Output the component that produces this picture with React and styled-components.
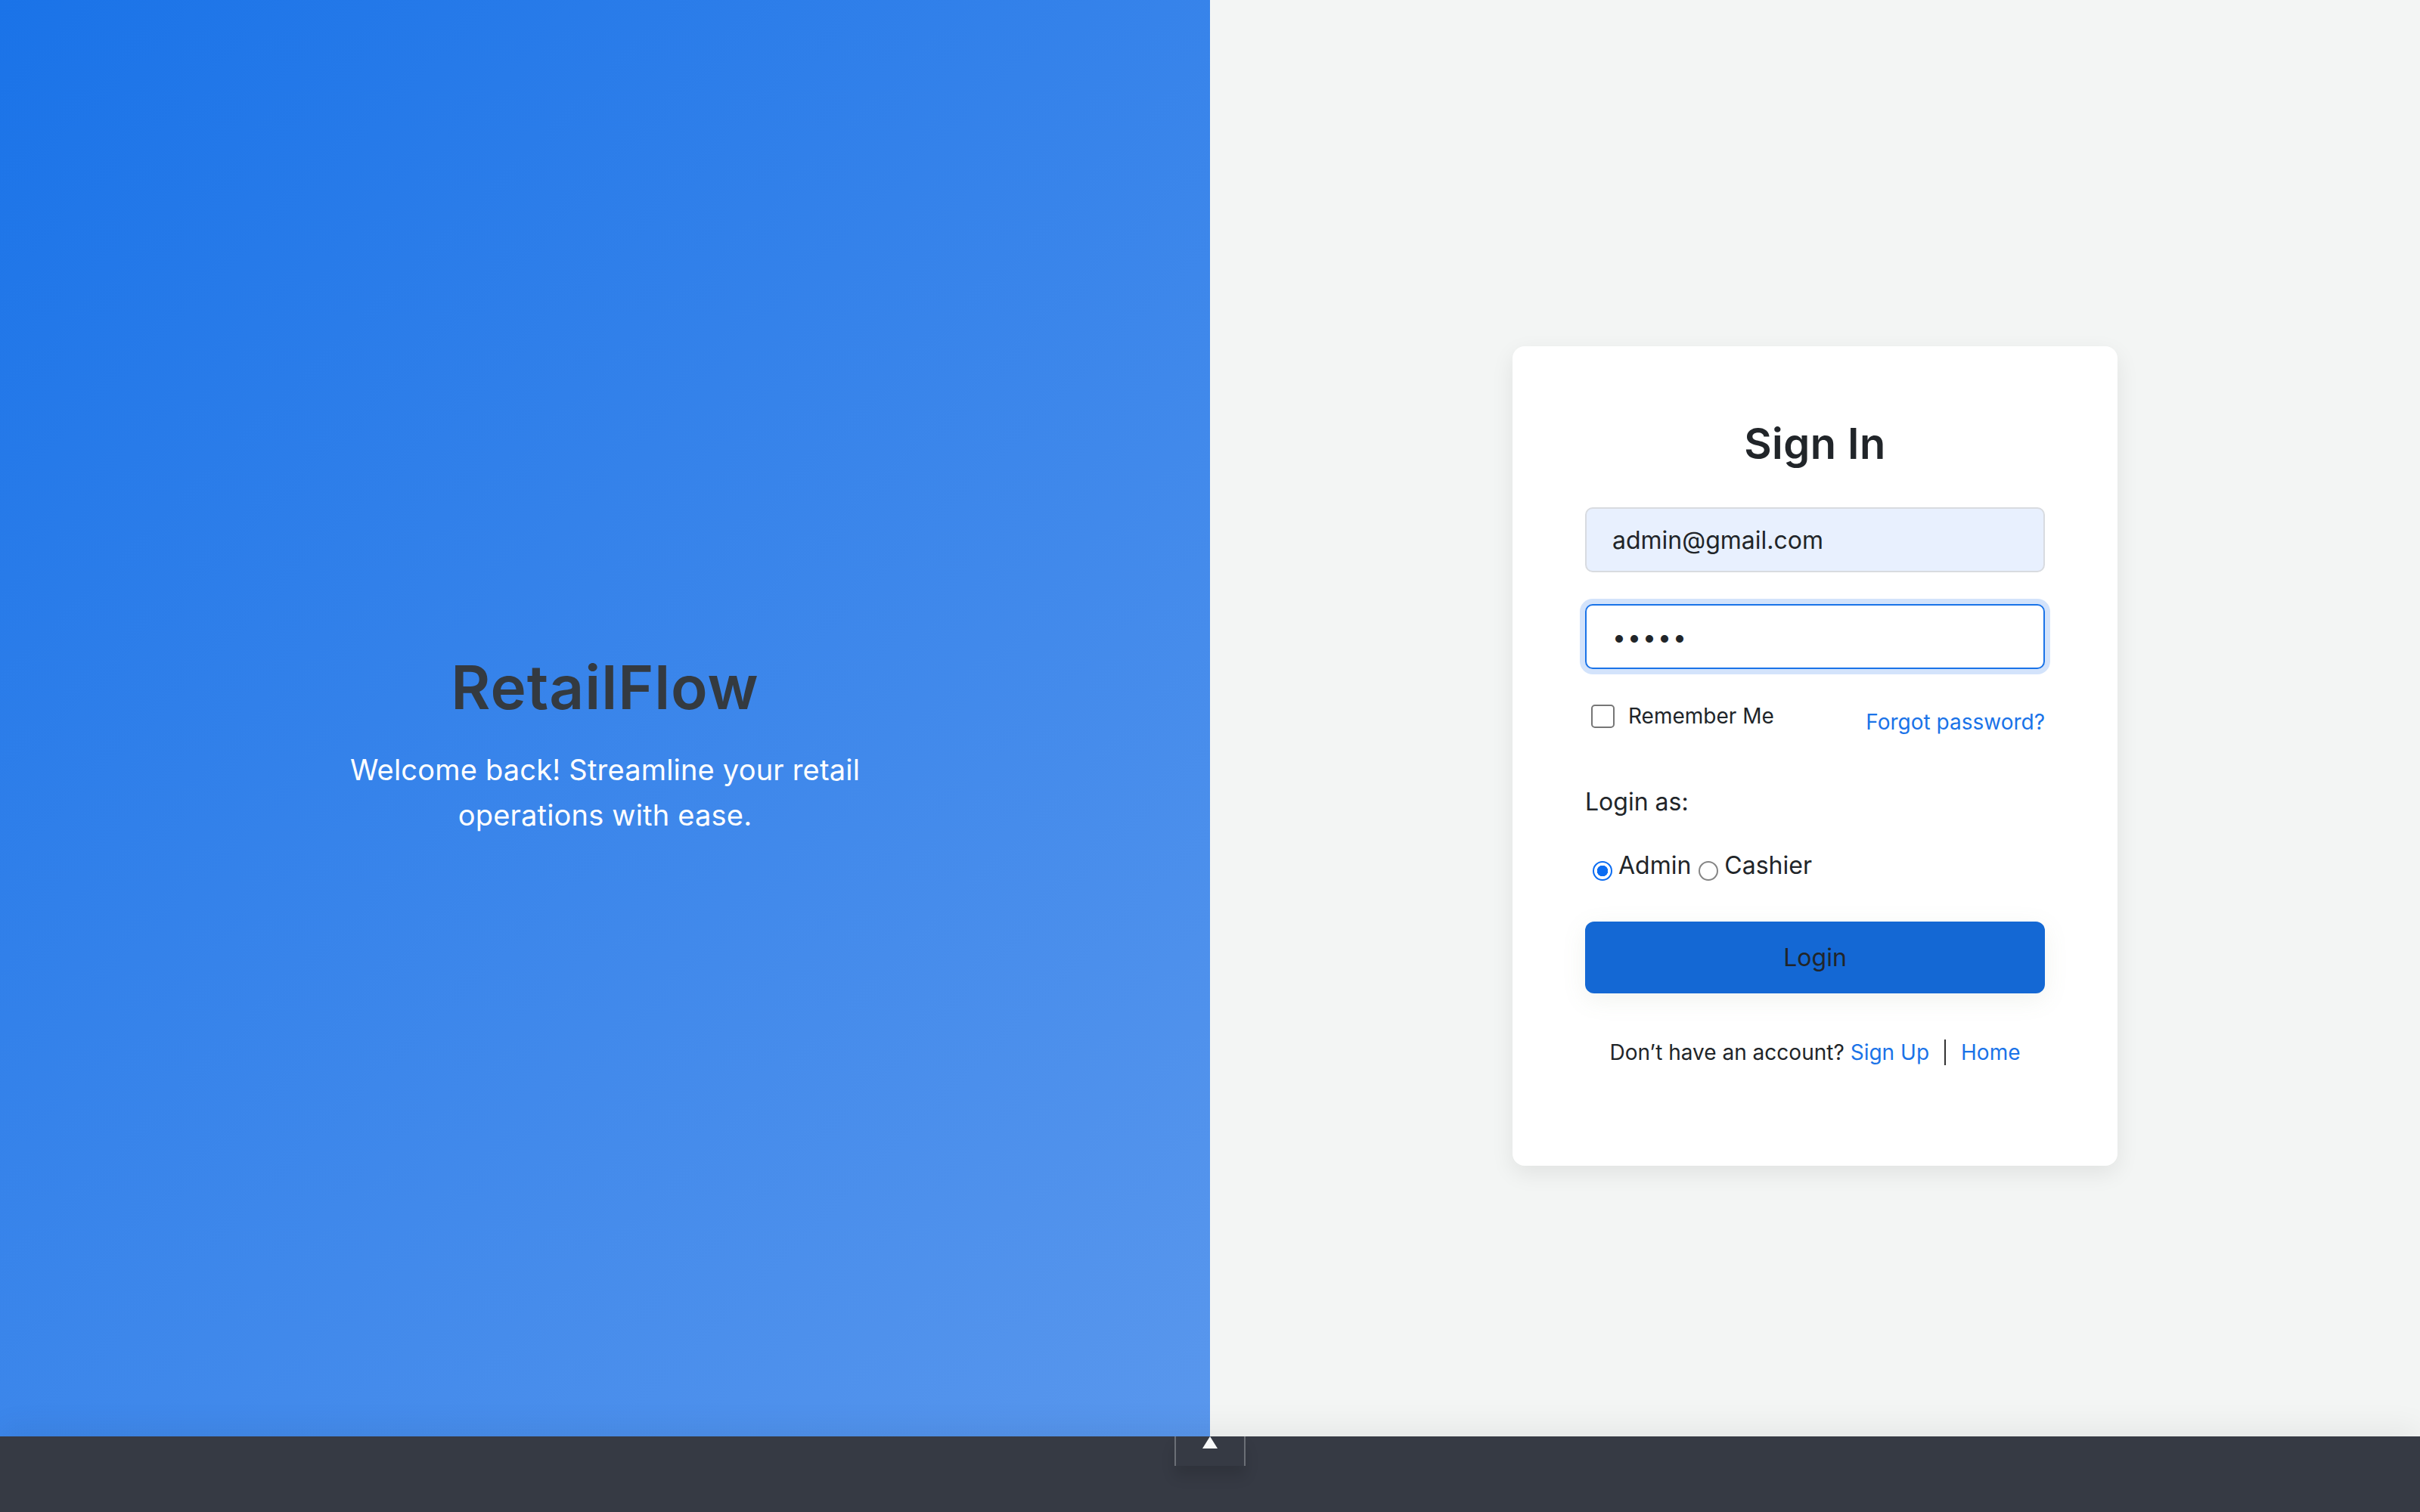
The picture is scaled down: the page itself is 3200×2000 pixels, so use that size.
import React from "react";
import styled, { createGlobalStyle } from "styled-components";

const GlobalStyle = createGlobalStyle`
  html, body {
    margin: 0;
    padding: 0;
  }
  body {
    font-family: Inter, "Noto Sans", Arial, sans-serif;
    color: #212529;
    background: #f3f5f4;
  }
  * {
    box-sizing: border-box;
  }
`;

const Page = styled.div`
  display: grid;
  grid-template-columns: 1fr 1fr;
  height: 100vh;
`;

const BrandPanel = styled.section`
  display: flex;
  align-items: center;
  justify-content: center;
  background: linear-gradient(135deg, #1a73e8 0%, #5b98ed 100%);
`;

const Hero = styled.div`
  max-width: 760px;
  text-align: center;
`;

const Brand = styled.h1`
  margin: 0 0 31px;
  font-family: Inter, "Open Sans", sans-serif;
  font-size: 80px;
  line-height: 1.2;
  font-weight: 600;
  letter-spacing: 1px;
  color: #343a40;
`;

const Tagline = styled.p`
  margin: 0 0 32px;
  font-size: 38px;
  line-height: 60px;
  letter-spacing: 0.2px;
  color: #ffffff;
`;

const FormPanel = styled.section`
  display: flex;
  align-items: center;
  justify-content: center;
  background: #f3f5f4;
`;

const Card = styled.div`
  width: 800px;
  padding: 96px 96px 130px;
  background: #ffffff;
  border-radius: 16px;
  box-shadow: 0 10px 30px rgba(0, 0, 0, 0.08);
`;

const Title = styled.h2`
  margin: 0 0 50px;
  text-align: center;
  font-size: 56px;
  line-height: 1.2;
  font-weight: 600;
  letter-spacing: 0.5px;
  color: #212529;
`;

const Input = styled.input`
  display: block;
  width: 100%;
  height: 86px;
  margin-bottom: ${(p) => p.$gap || 0}px;
  padding: 0 34px;
  font-family: Inter, sans-serif;
  font-size: 32px;
  color: #212529;
  background: ${(p) => (p.$filled ? "#e8f0fe" : "#ffffff")};
  border: 2px solid ${(p) => (p.$focused ? "#1a73e8" : "#d8dbe0")};
  border-radius: 10px;
  box-shadow: ${(p) => (p.$focused ? "0 0 0 7px #d3e3fb" : "none")};
  outline: none;
  letter-spacing: ${(p) => (p.type === "password" ? "2px" : "0")};
`;

const OptionsRow = styled.div`
  display: flex;
  justify-content: space-between;
  align-items: flex-start;
  margin-top: 42px;
`;

const CheckLabel = styled.label`
  display: flex;
  align-items: center;
  gap: 18px;
  padding-left: 8px;
  font-size: 28px;
  line-height: 40px;
  color: #212529;
`;

const CheckBox = styled.input`
  appearance: none;
  width: 31px;
  height: 31px;
  margin: 0;
  background: #fff;
  border: 2px solid #767676;
  border-radius: 5px;
`;

const Link = styled.a`
  color: #1a73e8;
  text-decoration: none;
  font-size: 28px;
  line-height: 40px;
  margin-top: ${(p) => p.$offset || 0}px;
`;

const RoleLabel = styled.div`
  margin-top: 62px;
  font-size: 32px;
  line-height: 48px;
`;

const RoleRow = styled.div`
  display: flex;
  align-items: flex-start;
  margin-top: 36px;
  font-size: 32px;
  line-height: 48px;
`;

const RoleOption = styled.label`
  display: flex;
  align-items: flex-start;
`;

const Radio = styled.input`
  appearance: none;
  width: 26px;
  height: 26px;
  margin: 18px 8px 0 10px;
  border-radius: 50%;
  border: 2px solid ${(p) => (p.checked ? "#0b6cf2" : "#858585")};
  background: ${(p) =>
    p.checked
      ? "radial-gradient(circle, #0b6cf2 0 7px, #ffffff 7.5px)"
      : "#ffffff"};
`;

const LoginButton = styled.button`
  display: block;
  width: 100%;
  height: 95px;
  margin-top: 50px;
  font-family: Inter, sans-serif;
  font-size: 32px;
  color: #212529;
  background: #1468d4;
  border: none;
  border-radius: 12px;
  box-shadow: 0 8px 32px rgba(120, 140, 100, 0.1);
`;

const Footer = styled.p`
  display: flex;
  align-items: center;
  justify-content: center;
  margin: 58px 0 0;
  font-size: 28px;
  line-height: 40px;
  color: #212529;
`;

const FooterLink = styled.a`
  margin-left: ${(p) => p.$space || 0}px;
  color: #1a73e8;
  text-decoration: none;
`;

const Divider = styled.span`
  width: 2px;
  height: 34px;
  margin: 0 20px;
  background: #333;
`;

const DockBar = styled.div`
  position: fixed;
  left: 0;
  right: 0;
  bottom: 0;
  height: 100px;
  background: #363a44;
  box-shadow: 0 -12px 40px rgba(0, 0, 0, 0.06);
`;

const DockTab = styled.div`
  position: absolute;
  top: 0;
  left: 50%;
  width: 94px;
  height: 39px;
  margin-left: -47px;
  background: #363a44;
  border-left: 2px solid #6b6f76;
  border-right: 2px solid #6b6f76;
  box-shadow: 0 14px 18px rgba(0, 0, 0, 0.12);
  display: flex;
  justify-content: center;
`;

const Arrow = styled.span`
  width: 0;
  height: 0;
  border-left: 10px solid transparent;
  border-right: 10px solid transparent;
  border-bottom: 16px solid #f8f9fa;
`;

export default function App() {
  return (
    <>
      <GlobalStyle />
      <Page>
        <BrandPanel>
          <Hero>
            <Brand>RetailFlow</Brand>
            <Tagline>
              Welcome back! Streamline your retail
              <br />
              operations with ease.
            </Tagline>
          </Hero>
        </BrandPanel>

        <FormPanel>
          <Card>
            <Title>Sign In</Title>
            <Input
              type="email"
              defaultValue="admin@gmail.com"
              $filled
              $gap={42}
            />
            <Input type="password" defaultValue="12345" $focused />

            <OptionsRow>
              <CheckLabel>
                <CheckBox type="checkbox" />
                Remember Me
              </CheckLabel>
              <Link href="#" $offset={8}>
                Forgot password?
              </Link>
            </OptionsRow>

            <RoleLabel>Login as:</RoleLabel>
            <RoleRow>
              <RoleOption>
                <Radio type="radio" name="role" checked readOnly />
                Admin
              </RoleOption>
              <RoleOption>
                <Radio type="radio" name="role" readOnly />
                Cashier
              </RoleOption>
            </RoleRow>

            <LoginButton>Login</LoginButton>

            <Footer>
              Don’t have an account?
              <FooterLink href="#" $space={8}>
                Sign Up
              </FooterLink>
              <Divider />
              <FooterLink href="#">Home</FooterLink>
            </Footer>
          </Card>
        </FormPanel>
      </Page>

      <DockBar>
        <DockTab>
          <Arrow />
        </DockTab>
      </DockBar>
    </>
  );
}
